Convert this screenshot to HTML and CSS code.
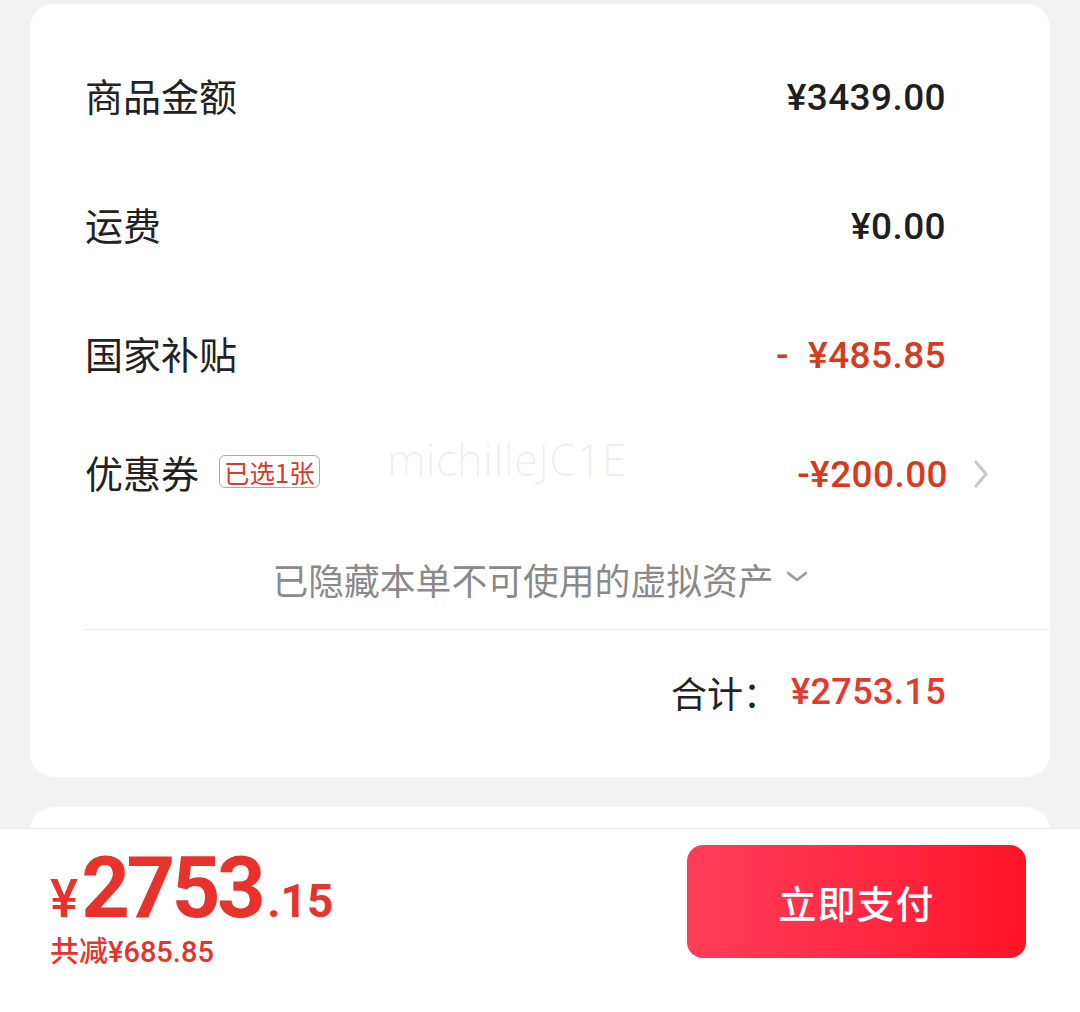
FILE: index.html
```html
<!DOCTYPE html>
<html lang="zh-CN">
<head>
<meta charset="utf-8">
<link rel="stylesheet" href="styles.css">
</head>
<body>
<div class="page">
  <section class="card">
    <div class="row">
      <span class="label">商品金额</span>
      <span class="value">¥3439.00</span>
    </div>
    <div class="row">
      <span class="label">运费</span>
      <span class="value">¥0.00</span>
    </div>
    <div class="row">
      <span class="label">国家补贴</span>
      <span class="value red">-&nbsp;&nbsp;¥485.85</span>
    </div>
    <div class="row row-coupon">
      <span class="label">优惠券<span class="tag">已选1张</span></span>
      <span class="value red">-¥200.00<svg class="chev-right" width="14" height="28" viewBox="0 0 14 28"><polyline points="2,2 12,14 2,26" fill="none" stroke="#c9c9c9" stroke-width="3" stroke-linecap="round" stroke-linejoin="round"/></svg></span>
    </div>
    <div class="hidden-row">已隐藏本单不可使用的虚拟资产<svg class="chev-down" width="22" height="11" viewBox="0 0 22 11"><polyline points="2,2 11,9 20,2" fill="none" stroke="#9a9a9a" stroke-width="2.5" stroke-linecap="round" stroke-linejoin="round"/></svg></div>
    <div class="divider"></div>
    <div class="total-row">
      <span class="total-label">合计：</span>
      <span class="total-value">¥2753.15</span>
    </div>
    <div class="watermark">michilleJC1E</div>
  </section>
  <section class="card card-next"></section>
</div>
<footer class="paybar">
  <div class="pay-left">
    <div class="pay-price"><span class="yen">¥</span><span class="int">2753</span><span class="dec">.15</span></div>
    <div class="pay-save">共减¥685.85</div>
  </div>
  <button class="pay-btn">立即支付</button>
</footer>
</body>
</html>
```
FILE: styles.css
```css
* { box-sizing: border-box; }
html, body {
  margin: 0;
  padding: 0;
  background: #f2f2f2;
  font-family: Roboto, "Noto Sans CJK SC", sans-serif;
  color: #1f1f1f;
}
.page {
  padding: 4px 30px 0;
  height: 1012px;
  overflow: hidden;
}
.card {
  position: relative;
  background: #fff;
  border-radius: 24px;
  padding: 26px 0 23px;
}
.card-next {
  margin-top: 30px;
  height: 300px;
  padding: 0;
}
.row {
  display: flex;
  align-items: center;
  justify-content: space-between;
  height: 129px;
  margin: 0 104px 0 55px;
}
.row-coupon { height: 108px; }
.label {
  display: flex;
  align-items: center;
  font-family: "Noto Sans CJK SC", sans-serif;
  font-size: 38px;
  color: #222;
}
.tag {
  margin-left: 20px;
  font-size: 25.5px;
  line-height: 31px;
  padding: 0 4px;
  color: #d93a25;
  border: 1.5px solid #e59585;
  border-radius: 6px;
}
.value {
  display: flex;
  align-items: center;
  font-size: 37px;
  font-weight: 500;
  color: #1f1f1f;
  letter-spacing: 0.4px;
  margin-top: 6px;
}
.value.red { color: #d83a20; }
.chev-right {
  margin-left: 26px;
  margin-right: -42px;
}
.hidden-row {
  display: flex;
  align-items: center;
  justify-content: center;
  height: 104px;
  padding-top: 4px;
  font-family: "Noto Sans CJK SC", sans-serif;
  font-size: 35.8px;
  color: #8a8a8a;
}
.chev-down { margin-left: 12px; margin-top: -6px; }
.divider {
  height: 1px;
  background: #ececec;
  margin-left: 54px;
}
.total-row {
  display: flex;
  align-items: center;
  justify-content: flex-end;
  height: 124px;
  margin-right: 104px;
}
.total-label {
  font-family: "Noto Sans CJK SC", sans-serif;
  font-size: 36px;
  color: #222;
}
.total-value {
  font-size: 36px;
  font-weight: 500;
  color: #e8382d;
  margin-left: 12px;
  letter-spacing: 0.4px;
}
.watermark {
  position: absolute;
  left: 357px;
  top: 426px;
  font-family: "Open Sans", sans-serif;
  font-weight: 300;
  font-size: 43.5px;
  letter-spacing: 0.4px;
  color: rgba(0, 0, 0, 0.07);
  pointer-events: none;
}
.paybar {
  position: fixed;
  left: 0;
  right: 0;
  bottom: 0;
  height: 184px;
  background: #fff;
  border-top: 1px solid #ededed;
  display: flex;
  justify-content: space-between;
  align-items: flex-start;
  padding: 16px 54px 0 50px;
}
.pay-left { padding-top: 1px; color: #e8332c; }
.pay-price {
  display: flex;
  align-items: baseline;
  line-height: 1;
  height: 86px;
  font-weight: 500;
}
.yen { font-size: 53px; margin-right: 3px; }
.int { font-size: 85px; letter-spacing: -3.5px; font-weight: 700; }
.dec { font-size: 46px; margin-left: 5px; font-weight: 700; }
.pay-save {
  margin-top: 4px;
  font-family: Roboto, "Noto Sans CJK SC", sans-serif;
  font-size: 29px;
  line-height: 32px;
  font-weight: 500;
}
.pay-btn {
  width: 339px;
  height: 113px;
  border: none;
  border-radius: 16px;
  background: linear-gradient(90deg, #ff3d5a 0%, #ff2a45 50%, #ff1426 100%);
  color: #fff;
  font-family: "Noto Sans CJK SC", sans-serif;
  font-size: 38px;
  font-weight: 500;
  letter-spacing: 1px;
}
```
